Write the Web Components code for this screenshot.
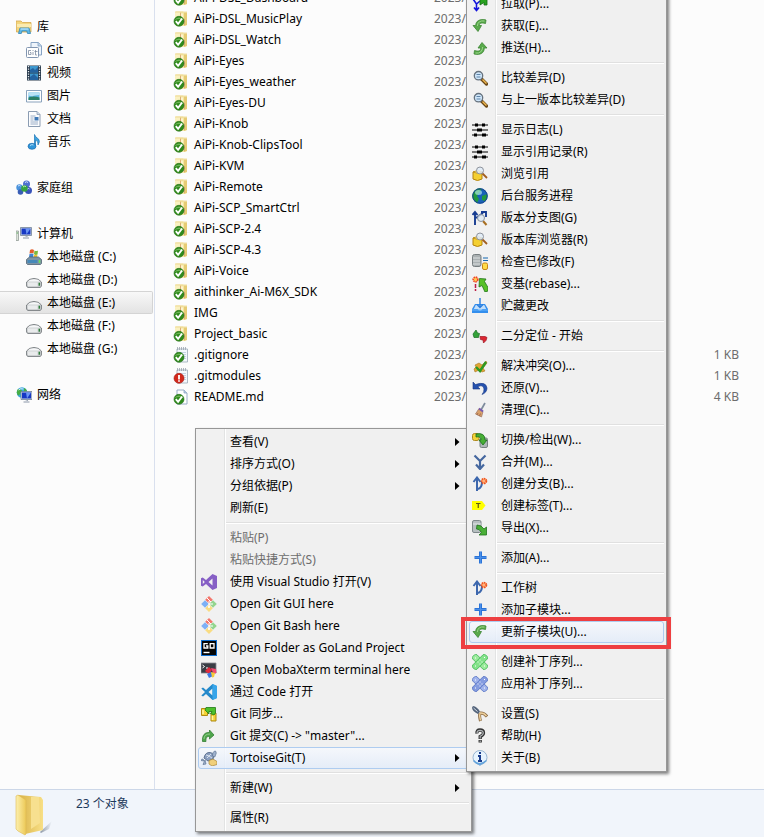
<!DOCTYPE html>
<html lang="zh-CN">
<head>
<meta charset="utf-8">
<title>Explorer</title>
<style>
  html, body { height: 100%; }
  body {
    margin: 0;
    overflow: hidden;
    background: #fcfcfc;
    color: #000;
    font: 12px/16px "Noto Sans", "Noto Sans CJK SC", sans-serif;
  }
</style>
</head>
<body>
<explorer-window>
  <nav-pane slot="nav">
    <nav-group icon="library" label="库">
      <nav-item icon="gitlib">Git</nav-item>
      <nav-item icon="video">视频</nav-item>
      <nav-item icon="picture">图片</nav-item>
      <nav-item icon="document">文档</nav-item>
      <nav-item icon="music">音乐</nav-item>
    </nav-group>
    <nav-group icon="homegroup" label="家庭组"></nav-group>
    <nav-group icon="computer" label="计算机">
      <nav-item icon="sysdrive">本地磁盘 (C:)</nav-item>
      <nav-item icon="drive">本地磁盘 (D:)</nav-item>
      <nav-item icon="drive" selected>本地磁盘 (E:)</nav-item>
      <nav-item icon="drive">本地磁盘 (F:)</nav-item>
      <nav-item icon="drive">本地磁盘 (G:)</nav-item>
    </nav-group>
    <nav-group icon="network" label="网络"></nav-group>
  </nav-pane>
  <file-list slot="files"></file-list>
  <status-bar slot="status">23 个对象</status-bar>
</explorer-window>

<popup-menu class="context">
  <menu-item submenu>查看(V)</menu-item>
  <menu-item submenu>排序方式(O)</menu-item>
  <menu-item submenu>分组依据(P)</menu-item>
  <menu-item>刷新(E)</menu-item>
  <menu-separator></menu-separator>
  <menu-item disabled>粘贴(P)</menu-item>
  <menu-item disabled>粘贴快捷方式(S)</menu-item>
  <menu-item icon="vs">使用 Visual Studio 打开(V)</menu-item>
  <menu-item icon="gitfw">Open Git GUI here</menu-item>
  <menu-item icon="gitfw">Open Git Bash here</menu-item>
  <menu-item icon="goland">Open Folder as GoLand Project</menu-item>
  <menu-item icon="moba">Open MobaXterm terminal here</menu-item>
  <menu-item icon="vscode">通过 Code 打开</menu-item>
  <menu-item icon="sync">Git 同步...</menu-item>
  <menu-item icon="commit">Git 提交(C) -&gt; "master"...</menu-item>
  <menu-item icon="tortoise" submenu active>TortoiseGit(T)</menu-item>
  <menu-separator></menu-separator>
  <menu-item submenu>新建(W)</menu-item>
  <menu-separator></menu-separator>
  <menu-item>属性(R)</menu-item>
</popup-menu>

<popup-menu class="tortoise">
  <menu-item icon="pull">拉取(P)...</menu-item>
  <menu-item icon="fetch">获取(E)...</menu-item>
  <menu-item icon="push">推送(H)...</menu-item>
  <menu-separator></menu-separator>
  <menu-item icon="diff">比较差异(D)</menu-item>
  <menu-item icon="diff">与上一版本比较差异(D)</menu-item>
  <menu-separator></menu-separator>
  <menu-item icon="log">显示日志(L)</menu-item>
  <menu-item icon="log">显示引用记录(R)</menu-item>
  <menu-item icon="browse">浏览引用</menu-item>
  <menu-item icon="globe">后台服务进程</menu-item>
  <menu-item icon="graph">版本分支图(G)</menu-item>
  <menu-item icon="browse">版本库浏览器(R)</menu-item>
  <menu-item icon="check">检查已修改(F)</menu-item>
  <menu-item icon="rebase">变基(rebase)...</menu-item>
  <menu-item icon="stash">贮藏更改</menu-item>
  <menu-separator></menu-separator>
  <menu-item icon="bisect">二分定位 - 开始</menu-item>
  <menu-separator></menu-separator>
  <menu-item icon="resolve">解决冲突(O)...</menu-item>
  <menu-item icon="revert">还原(V)...</menu-item>
  <menu-item icon="clean">清理(C)...</menu-item>
  <menu-separator></menu-separator>
  <menu-item icon="switch">切换/检出(W)...</menu-item>
  <menu-item icon="merge">合并(M)...</menu-item>
  <menu-item icon="branch">创建分支(B)...</menu-item>
  <menu-item icon="tag">创建标签(T)...</menu-item>
  <menu-item icon="export">导出(X)...</menu-item>
  <menu-separator></menu-separator>
  <menu-item icon="add">添加(A)...</menu-item>
  <menu-separator></menu-separator>
  <menu-item icon="branch">工作树</menu-item>
  <menu-item icon="add">添加子模块...</menu-item>
  <menu-item icon="fetch" active marked>更新子模块(U)...</menu-item>
  <menu-separator></menu-separator>
  <menu-item icon="patch">创建补丁序列...</menu-item>
  <menu-item icon="patchblue">应用补丁序列...</menu-item>
  <menu-separator></menu-separator>
  <menu-item icon="settings">设置(S)</menu-item>
  <menu-item icon="help">帮助(H)</menu-item>
  <menu-item icon="about">关于(B)</menu-item>
</popup-menu>

<script>
const OK = '<circle cx="6" cy="10.3" r="5" fill="#2f8a1c" stroke="#1f6d12" stroke-width=".6"/><path d="M1.8 9a4.500 4 0 0 1 8.400 0q-4-2-8.400 0" fill="#6fb658"/><path d="M2.800 10.200l2.300 2.600 4-5.300" fill="none" stroke="#fff" stroke-width="1.900"/>';
const NOTE = '<path d="M4 2h10.500v13H4z" fill="#f4f8fc" stroke="#9aa9b8" stroke-width=".8"/><path d="M4.500 0v3M6.500 0v3M8.500 0v3M10.500 0v3M12.500 0v3" stroke="#9aa3ad" stroke-width=".8"/><path d="M6 5.500h7M6 7.500h7M6 9.500h7M6 11.500h7" stroke="#b8c9dc" stroke-width=".8"/>';
const FOLDER = '<path d="M2 2l1-1.500h7l1 1h3V14l-4 1H3z" fill="#f5e6a2"/><path d="M2 2l1-1.500h4.500L8 14H3z" fill="#faf1c0"/><path d="M11 1.500h3V14l-3 1z" fill="#e6cb74"/><path d="M7.500 1.500v5.500M11.500 8v6" stroke="#dcae74"/><path d="M9 2.500v6" stroke="#fff8dc" stroke-width="1.500"/><path d="M2 1h12" stroke="#ecd68e" stroke-width=".8"/>';
const CYL = '<path d="M1 6v7q4.500 3 9 0V6z" fill="#f4cf31" stroke="#b4820d"/><path d="M1 6q4.500-3 9 0-4.500 2.500-9 0" fill="#fff19a" stroke="#b4820d" stroke-width=".8"/>';
const BRANCH = '<path d="M5 15V3M1.500 6L5 1.500 8.500 6M6 13q4-1 4-7" fill="none" stroke="#3d67ad" stroke-width="2"/>';
const SPARK = '<circle cx="12" cy="5" r="2.400" fill="#ffb27d" stroke="#f0541c" stroke-width="1.800" stroke-dasharray="1.400 .6"/>';
const BANDAGE = (a, b, s) => `<g stroke="${s}" stroke-width=".8"><rect x="-1" y="5" width="18" height="6" rx="2" fill="${a}" transform="rotate(45 8 8)"/><rect x="-1" y="5" width="18" height="6" rx="2" fill="${b}" transform="rotate(-45 8 8)"/></g><path d="M5.500 8h1M9.500 8h1M7.500 6h1M7.500 10h1M3 12h1M12 3.500h1M3 4h1M12 12h1" stroke="#fff"/>`;
const MONITOR = (x, y) => `<g transform="translate(${x} ${y})"><path d="M0 0h11v8H0z" fill="#c9d4e2" stroke="#64758c" stroke-width=".7"/><path d="M1 1h9v6H1z" fill="#1738c4"/><path d="M5 1h5L6 7z" fill="#6c95f2"/><path d="M4 8.500h3v1.500H2.500v1h6v-1" fill="#8a96a8"/></g>`;
const ICONS = {
  folder: FOLDER + OK,
  noteok: NOTE + OK,
  notebad: NOTE + '<circle cx="6" cy="10.300" r="5" fill="#d2281c" stroke="#a3170f" stroke-width=".6"/><path d="M6 7v4.500M6 12.300v1.500" stroke="#fff" stroke-width="1.800"/>',
  fileok: '<path d="M4 1h7l3 3v11H4z" fill="#fff" stroke="#8ea5c1" stroke-width=".9"/><path d="M11 1v3h3" fill="#b5cbe4" stroke="#8ea5c1" stroke-width=".8"/>' + OK,
  library: '<path d="M0 2h5l1.500 1.500H15V13H.5z" fill="#f4d67d" stroke="#d5a74c" stroke-width=".8"/><path d="M1 5h14v3H1z" fill="#fbebb0"/><path d="M2.500 14.500l1.500-5.500h9l1.500 5.500h-3l-.7-2.500H6l-.7 2.500z" fill="#5fb8e6" stroke="#3187b9" stroke-width=".8"/><path d="M4.500 10h8" stroke="#bce5fa" stroke-width="1.300"/>',
  gitlib: '<path d="M5 .5h7.500L15.500 4v9H5z" fill="#eef4fb" stroke="#87a3c4"/><path d="M12 .5V4h3.500" fill="#bdd3ea" stroke="#87a3c4" stroke-width=".8"/><rect x=".5" y="5.500" width="12" height="10" rx="1" fill="#fff" stroke="#8296b1"/><path d="M5 8.500H2.500v4H5v-2H4M7 10v3M7 8v1M9.500 8v5h1.500M8.500 9.500h3" fill="none" stroke="#7d8ba0" stroke-width=".8"/>',
  video: '<path d="M1 .5h14v15H1z" fill="#27394b"/><path d="M4 1h8v6.500H4zM4 8.500h8V15H4z" fill="#3f98ce"/><path d="M4 5l3-2 2 2 3-3v5.500H4zM4 12l4-3 4 4v2H4z" fill="#2463a0"/><path d="M2.500 1v14M13.500 1v14" stroke="#e8edf2" stroke-width="1.300" stroke-dasharray="1.300 1.200"/>',
  picture: '<path d="M.5 2.500h15v11.500H.5z" fill="#fff" stroke="#8aa2bc"/><path d="M2.500 4.500h11V12h-11z" fill="#58b4e2"/><path d="M2.500 4.500h11v2.500q-5 0-7 1.500l-4-1z" fill="#b9e2f5"/><path d="M2.500 12V9.500q5-2 11 0V12z" fill="#2b8068"/>',
  document: '<path d="M2.500.5H11L14 3.500v12H2.500z" fill="#fbfcfe" stroke="#8b9cb2"/><path d="M11 .5v3h3" fill="#ccd9e9" stroke="#8b9cb2" stroke-width=".8"/><path d="M4.500 5h5M4.500 7h3M4.500 9h3M4.500 11h7.500M4.500 13h7.500" stroke="#8ea5c1" stroke-width=".9"/><path d="M8.500 6h4v3.500h-4z" fill="#3e78b6"/>',
  music: '<path d="M8.500 12V.5q1 3 4 4.500 2 2.500-.5 6 .5-4-2.500-5V12" fill="#3ea2de" stroke="#1c76b8" stroke-width=".7"/><ellipse cx="6" cy="12.300" rx="4" ry="3" fill="#2f96da" stroke="#1b6aae" stroke-width=".7"/><path d="M4 11.500q2-1.500 3.500-.5" stroke="#b4e0fa" fill="none"/>',
  homegroup: '<circle cx="10.500" cy="4" r="3.500" fill="#4e6fd0"/><circle cx="3.500" cy="7.500" r="3.200" fill="#4a93dc"/><circle cx="12.500" cy="10.500" r="3.500" fill="#3953bb"/><circle cx="4.500" cy="12" r="2.800" fill="#395db5"/><circle cx="8.500" cy="8.500" r="3.300" fill="#35a340"/><path d="M7 7q1.500-1.500 3-.5" stroke="#bdf0b5" fill="none"/><path d="M9 2.500q1.500-1.500 3 0M2 6q1.500-1 2.500 0M11.500 9q1-1 2 0" stroke="#d3e4ff" fill="none"/>',
  computer: '<path d="M0 5h2.500v9.500H0z" fill="#dce3da" stroke="#88948c" stroke-width=".7"/><path d="M.7 7h1.200" stroke="#48a84a"/>' + MONITOR(4.5, 1.5),
  network: '<circle cx="6" cy="5.500" r="5.300" fill="#3ba7dc"/><path d="M2 2q3 0 4 1.500-2 3-3 5Q1 8 .7 5.500 1 3 2 2M8 1q2.500 1 3 3l-3 1zM5 8h4l-2 2.700z" fill="#47ae43"/><path d="M2.500 3q2-2 5-1" stroke="#d6f2fb" fill="none"/>' + MONITOR(5, 4.5),
  drive: '<path d="M.6 10Q3 6.500 8 6.500t7.400 3.500v4l-1 1.400H1.600l-1-1.400z" fill="#cfd2d4" stroke="#6f7578" stroke-width=".9"/><path d="M1.500 9.600Q4 7.300 8 7.300t6.500 2.300z" fill="#f6f7f8"/><path d="M1.500 10.500h10v3.800h-9.500z" fill="#e9ebec"/><path d="M13.300 10.700v3" stroke="#2f7d3a" stroke-width="1.500"/>',
  sysdrive: '<path d="M4 1q2-1.500 4 0l-.5 3.500q-2-1-4 0z" fill="#e4602c"/><path d="M8.500 1.500q2 1 3.500 0l-.5 4q-2 1-3.500-.5z" fill="#7cba3c"/><path d="M3.500 5q2-1 4 0L7 8.500H3z" fill="#3d83d3"/><path d="M8 5.500q2 1 3.500 0L11 9H7.500z" fill="#f4c22e"/><path d="M.5 10.500l3-2.500h9l3 2.500v4l-1 1H1.500l-1-1z" fill="#7e94a5" stroke="#506575" stroke-width=".8"/><path d="M1.500 11h10v3h-10z" fill="#4689b9"/><path d="M13.500 11v3" stroke="#6be15a" stroke-width="1.500"/>',
  vs: '<path d="M11.500 0L16 2v12l-4.500 2L5 10l-3.300 2.500L0 11.700V4.300l1.700-.8L5 6zM11.500 4.500L7.500 8l4 3.500zM1.800 6v4L3.800 8z" fill="#865fc5" fill-rule="evenodd"/>',
  gitfw: '<path d="M8 0l3.800 3.800L8 7.600 4.200 3.800z" fill="#f3766c"/><path d="M4 4.200L7.800 8 4 11.800.2 8z" fill="#7db0f6"/><path d="M12 4.200L15.800 8 12 11.800 8.200 8z" fill="#93d58e"/><path d="M8 8.400l3.800 3.800L8 16l-3.800-3.800z" fill="#f9dc82"/><path d="M6 2l4 4M8 5v6M8 8h4" stroke="#fff"/><circle cx="8" cy="11" r="1" fill="#fff"/>',
  goland: '<path d="M0 0h16v16H0z" fill="#0f6ed0"/><path d="M1 1h14v14H1z" fill="#050505"/><path d="M6.800 3.700H3v4.300h3.800V6H5M9.200 3.700h3.800v4.300H9.200z" fill="none" stroke="#fff" stroke-width="1.300"/><path d="M2.500 12.500h6" stroke="#fff" stroke-width="1.400"/>',
  moba: '<path d="M0 1h15v10H0z" fill="#3a3d45" stroke="#8b8b93" stroke-width=".8"/><path d="M1.500 3l2 1.500-2 1.500M5 6h2" stroke="#fff" fill="none"/><path d="M4 9l4-4 3 3-3 4z" fill="#e32b3d"/><path d="M10 6l5 1 .5 4-3 1z" fill="#f04a72"/><path d="M6 12l4-2 2 4-4 2z" fill="#3c78e4"/><path d="M10 10l4 1-1 4-2 .5z" fill="#f6ca37"/>',
  vscode: '<path d="M11.500 0L16 2v12l-4.500 2L5 10l-3 2.500L.3 11.500 4 8 .3 4.500 2 3.500 5 6zM11.500 4.500L7.500 8l4 3.500z" fill="#2489ca" fill-rule="evenodd"/><path d="M11.500 0L16 2v12l-4.500 2z" fill="#37a5ea"/>',
  sync: '<path d="M.5 2.500h6v7h-6z" fill="#f4d237" stroke="#af8a13"/><path d="M10 7h5v8h-5z" fill="#f4d237" stroke="#af8a13"/><path d="M5 1.500h9.500V7l-1.500 2-3.500-1.500 1.500-2H8v2.500L4 4z" fill="#4cc02c" stroke="#1f7a14" stroke-width=".8"/><path d="M2 4v4M11.500 10v4" stroke="#fff5a4" stroke-width="1.500"/>',
  commit: '<path d="M1.500 13.500C1 7 4 4 8.500 4.500V2L13 7l-4.500 4V8.500C6 8.300 4.500 9.500 5 13.500z" fill="#4fa54b" stroke="#357f35" stroke-width=".8"/><path d="M3 11q0-5 6-5" stroke="#93cf8c" fill="none"/>',
  tortoise: '<path d="M3 8q1-6 6.500-5.500Q14 4 12 9l-5 2z" fill="#8b9fc0" stroke="#5f7391"/><path d="M5 5l3 1 2-2M6 8l2-2 3 2" stroke="#d6e0ec" fill="none"/><path d="M11.500 6q0-5 3-5l.8 2-1.500 4zM2 9q-2 0-2 1.500L3 11zM4 10l1 4-3 .5zM12 9l2 4-2 1z" fill="#9fb2ce" stroke="#5f7391" stroke-width=".7"/><path d="M8 10.500l4-1.500 4 2.500v3L11 16l-3-2z" fill="#f0cf7a" stroke="#a88438" stroke-width=".7"/>',
  pull: '<path d="M4.500 14V8L1 3M4.500 8L8 5M2 11.500L4.500 14.500 7 11.500" fill="none" stroke="#1414dc" stroke-width="1.600"/><path d="M8 9V2h7v7h-3V6.500z" fill="#29a31f" stroke="#126911" stroke-width=".8"/>',
  fetch: '<path d="M14 2C8 .5 3.500 3 3.800 7.500H1L6 13.500l3.500-6H7.300C7.300 5 9 4.500 13.500 5.500z" fill="#59aa4b" stroke="#3c8534" stroke-width=".8"/><path d="M12.500 3Q6 2 5.300 8" stroke="#9bd48b" fill="none"/>',
  push: '<path d="M2 14c6 1.500 10.500-1 10.200-6H15L10 2.500 6 8h2.700C9 11 7 11.700 2.500 10.500z" fill="#59aa4b" stroke="#3c8534" stroke-width=".8"/><path d="M3.500 13Q10 14 10.700 7" stroke="#9bd48b" fill="none"/>',
  diff: '<path d="M9.500 9l5 5" stroke="#6b4816" stroke-width="3.200" stroke-linecap="round"/><path d="M10.500 9.500l4 4" stroke="#efb851" stroke-width="1.400"/><circle cx="6.500" cy="5.700" r="4.200" fill="#cfe6fa" stroke="#66727e" stroke-width="1.300"/><path d="M4.500 4.500h4M4.500 7h4" stroke="#5f84a8"/>',
  log: '<path d="M0 3h16M0 8h16M0 13h16" stroke="#000" stroke-width="1.200"/><path d="M3 1.500h3v3H3zM10 1.500h3v3h-3zM5 6.500h5v3H5zM2 11.500h3v3H2zM10 11.500h4v3h-4z" fill="#000"/>',
  browse: CYL + '<path d="M10 7l5 5" stroke="#a15e21" stroke-width="1.800"/><circle cx="8" cy="4.500" r="3.500" fill="#e1ecf8" fill-opacity=".85" stroke="#8e939c"/>',
  globe: '<circle cx="8" cy="8" r="7.700" fill="#1a62b8"/><path d="M2 3Q6-1 10 1L7 5 5 8l2 3-2 4Q0 12 .3 7zM10 8l5-2q1 4-2 7l-3-1z" fill="#23993d"/><circle cx="8" cy="8" r="7.200" fill="none" stroke="#17468f"/><ellipse cx="6.500" cy="4.500" rx="3.500" ry="2.500" fill="#b9ecf0" fill-opacity=".65"/>',
  graph: '<path d="M3 15V3M.5 5L3 2l2.500 3M4 8l7-5M9 2h5v5" fill="none" stroke="#173c91" stroke-width="1.900"/><path d="M11 11l3.500 4" stroke="#a86f22" stroke-width="2"/><circle cx="9" cy="8" r="3.500" fill="#dde8f2" fill-opacity=".8" stroke="#8993a0"/>',
  check: '<rect x=".5" y=".5" width="8.500" height="12" rx="2" fill="#aab0b2" stroke="#777e81"/><path d="M1 4h7M1 7h7M1 10h7" stroke="#dce0e1"/><path d="M11 4h5M11 6.500h5" stroke="#1569b2" stroke-width="1.200"/><rect x="10.500" y="9" width="5" height="6.500" rx="1.500" fill="#ffdb48" stroke="#c88616"/>',
  rebase: '<circle cx="3.500" cy="3.500" r="2.300" fill="#ffcb54" stroke="#f04522" stroke-width="1.700" stroke-dasharray="1.400 .6"/><path d="M3.500 8v4M3.500 13v2" stroke="#bc1c43" stroke-width="1.500"/><path d="M7 11l.5-8.500 6.500.5-1.500 2.500 3.500 6v3.500l-3 1-3-6.500z" fill="#58c028" stroke="#207419" stroke-width=".8"/>',
  stash: '<path d="M3 6h10l3 5v4H0v-4z" fill="#338eed"/><path d="M3.800 7h8.400l2 4h-3.700q-2.500 3-5 0H1.800z" fill="#c3dffa"/><path d="M8 0v9M5 6.500l3 3 3-3" fill="none" stroke="#287dde" stroke-width="1.400"/><path d="M0 12h16" stroke="#67b3fb"/>',
  bisect: '<path d="M1 6l3-4 1.500 3 2 .5-1 4H2z" fill="#33a239" stroke="#176c22" stroke-width=".7"/><path d="M8 8.500h5l2 1-1 3-2.500 2.500-.5-3-2.500-.5z" fill="#dc2631" stroke="#9d1421" stroke-width=".7"/>',
  resolve: '<path d="M3 7l4-2 3 2 4-4 1 2-4 5 2 3-3 1-3-2-4 2-1-3 2-2z" fill="#e2a632" stroke="#a47623" stroke-width=".6"/><path d="M4 9l4 4L14 4" stroke="#2d9a23" stroke-width="2.400" fill="none"/>',
  revert: '<path d="M1 2v7h7L5.800 6.700Q11 4 12 9q.3 3-2 5.500 5-2 5-6.500Q14 1 3.500 4.500z" fill="#2552ae" stroke="#173785" stroke-width=".6"/>',
  clean: '<path d="M13 1L9 8" stroke="#7e8b9c" stroke-width="1.700"/><path d="M7 6.500l4 3-1.500 5.500-6-3z" fill="#d9a16b" stroke="#9c7262" stroke-width=".7"/><path d="M7 6.500l4 3" stroke="#765ab0" stroke-width="2"/><path d="M6 11l-1 2M8.500 11.500L7.500 14" stroke="#986043" stroke-width=".8"/>',
  switch: '<rect x="8" y="6" width="7.500" height="9.500" rx="1.500" fill="#aeb7b8" stroke="#798182"/><rect x=".5" y="1.500" width="6.500" height="7" rx="2" fill="#f3d33a" stroke="#b08a1e"/><path d="M4 2q9-2 9 6h2l-4 5-4-5h2q0-4-5-3z" fill="#47ae35" stroke="#19701c" stroke-width=".8"/>',
  merge: '<path d="M2.500 1.500L8 7l5.500-5.500M8 6v8M4 10.500L8 15l4-4.500" fill="none" stroke="#45679f" stroke-width="2.200"/>',
  branch: BRANCH + SPARK,
  tag: '<path d="M0 3h10l3.500 4.500L10 12H0z" fill="#ff0"/><path d="M4 5.500h4.500M6.250 5.500V10" stroke="#5f5a12" stroke-width="1.200"/>',
  export: '<rect x=".5" y=".5" width="8.500" height="12" rx="1.500" fill="#b7bfc1" stroke="#7e888b"/><path d="M1 4h8" stroke="#e4e8e9"/><path d="M5 5l4 1 3 3 2.500-2v8H7l2.500-2.500L7 9.500 4.500 9z" fill="#4aaf37" stroke="#20741d" stroke-width=".8"/>',
  add: '<path d="M8.500 1.500v12M2.500 7.500h12" stroke="#2b74d8" stroke-width="3"/><path d="M8.500 2v11M3 7.500h11" stroke="#4a8fe8"/>',
  patch: BANDAGE('#9beb9d', '#83e28a', '#43b857'),
  patchblue: BANDAGE('#a1b4ec', '#859ce0', '#5673c3'),
  settings: '<path d="M8 7q-1 3 .5 8M8 7q4-.5 7 3.500" stroke="#8b6a42" stroke-width="3" fill="none"/><path d="M8 7q-1 3 .5 7.500M8 7q4-.5 6.500 3" stroke="#edcf9c" stroke-width="1.400" fill="none"/><path d="M1 0q4 .5 7 5.500l-2 2.500Q0 5 0 1.500z" fill="#54647b"/><path d="M1.500 2l4 3.500" stroke="#d6dde6"/>',
  help: '<path d="M5 5.500Q4.500 2 8 2t3.500 3q0 2-3.300 3.500V11M8.200 12v2.500" fill="none" stroke="#333" stroke-width="3.300"/><path d="M5 5q0-2.700 3-2.700t3.300 2.500Q11.200 7 8.200 8.300v2.200M8.200 12.500v1.500" fill="none" stroke="#aeb2b5" stroke-width="1.200"/>',
  about: '<circle cx="8" cy="7.500" r="7" fill="#e6f3fd" stroke="#82a5c6" stroke-width=".8"/><path d="M5 13.500l3 2.500 2.500-2.500" fill="#72a9dc"/><path d="M1.500 10.500q5.500 6.500 13 0" stroke="#63a3dc" stroke-width="1.500" fill="none"/><path d="M8 2v2M6 6h2v5M6 11h4" stroke="#1a3d8d" stroke-width="2" fill="none"/>'
};
const svg = (name, size = 16) => ICONS[name]
  ? `<svg viewBox="0 0 16 16" width="${size}" height="${size}" aria-hidden="true">${ICONS[name]}</svg>` : '';

class ShadowElement extends HTMLElement {
  connectedCallback() {
    if (!this.shadowRoot) this.attachShadow({ mode: 'open' }).innerHTML = this.view();
  }
}
const define = (name, view) => customElements.define(name, class extends ShadowElement {
  view() { return view(this); }
});

define('explorer-window', () => `<style>
  :host { display: flex; flex-direction: column; height: 100%; }
  .main { flex: 1; min-height: 0; display: flex; overflow: hidden; }
  main { flex: 1; min-width: 0; }
</style><div class="main"><slot name="nav"></slot><main><slot name="files"></slot></main></div><slot name="status"></slot>`);

define('nav-pane', () => `<style>
  :host { display: block; flex: none; width: 154px; border-right: 1px solid #d9e0ee; }
  nav { display: flex; flex-direction: column; gap: 23px; padding-top: 15px; }
</style><nav><slot></slot></nav>`);

const ROW = `a { display: flex; align-items: center; gap: 5px; box-sizing: border-box; height: 23px; color: inherit;
  text-decoration: none; white-space: nowrap; border: 1px solid transparent; border-left: 0; border-radius: 0 2px 2px 0; }
  svg { flex: none; }`;
define('nav-group', el => `<style>
  :host { display: block; } ${ROW} a { padding-left: 16px; }
</style><a href="#">${svg(el.getAttribute('icon'))}<span>${el.getAttribute('label')}</span></a><slot></slot>`);
define('nav-item', el => `<style>
  :host { display: block; } ${ROW} a { padding-left: 26px; margin-right: 1px; }
  :host([selected]) a { background: linear-gradient(#f8f8f8, #e3e3e3); border-color: #d4d4d4; }
</style><a href="#">${svg(el.getAttribute('icon'))}<slot></slot></a>`);

const FILES = [
  ...['AiPi-DSL_Dashboard', 'AiPi-DSL_MusicPlay', 'AiPi-DSL_Watch', 'AiPi-Eyes', 'AiPi-Eyes_weather', 'AiPi-Eyes-DU',
    'AiPi-Knob', 'AiPi-Knob-ClipsTool', 'AiPi-KVM', 'AiPi-Remote', 'AiPi-SCP_SmartCtrl', 'AiPi-SCP-2.4', 'AiPi-SCP-4.3',
    'AiPi-Voice', 'aithinker_Ai-M6X_SDK', 'IMG', 'Project_basic'].map(n => ['folder', n, '']),
  ['noteok', '.gitignore', '1 KB'], ['notebad', '.gitmodules', '1 KB'], ['fileok', 'README.md', '4 KB']
];
/* The list is scrolled so that its first row is partly out of view. */
define('file-list', () => `<style>
  :host { display: block; }
  table { width: 100%; table-layout: fixed; border-collapse: collapse; margin-top: -13px; }
  td { height: 21px; padding: 0; white-space: nowrap; vertical-align: middle; }
  .name { width: 279px; }
  .name div { display: flex; align-items: center; gap: 5px; padding-left: 18px; }
  .date, .size { color: #6d6d6d; }
  .size { text-align: right; padding-right: 25px; }
</style><table><tbody>${FILES.map(([icon, name, size]) =>
  `<tr><td class="name"><div>${svg(icon)}<span>${name}</span></div></td><td class="date">2023/</td><td class="size">${size}</td></tr>`).join('')}</tbody></table>`);

define('status-bar', () => `<style>
  :host { display: flex; flex: none; gap: 22px; box-sizing: border-box; height: 48px; padding: 3px 14px 0;
    border-top: 1px solid #ccd7e8; background: #f1f5fb; color: #1e395b; }
  span { padding-top: 3px; }
</style><svg width="40" height="44" viewBox="0 0 40 44" aria-hidden="true">
  <defs>
    <linearGradient id="a" x1="0" x2="1"><stop offset="0" stop-color="#fdf0ae"/><stop offset="1" stop-color="#ecc957"/></linearGradient>
    <linearGradient id="b" x1="0" x2="1"><stop offset="0" stop-color="#d8b145"/><stop offset="1" stop-color="#f8df86"/></linearGradient>
    <linearGradient id="c" x1="0" x2="1"><stop offset="0" stop-color="#8d97a6"/><stop offset="1" stop-color="#f1f5fb"/></linearGradient>
  </defs>
  <path d="M26 39l12-11-3 8-8 4z" fill="url(#c)"/>
  <path d="M4 2l23 2 2 3v30l-18 4z" fill="url(#b)"/>
  <path d="M17 4h8l1 26-9 6z" fill="#f7e08f"/>
  <path d="M2 3l2-1 8 5v34l-1 1-7-4-2-2z" fill="url(#a)" stroke="#ddb954" stroke-width=".6"/>
</svg><span><slot></slot></span>`);

define('popup-menu', () => `<style>
  :host { display: block; position: absolute; box-sizing: border-box; padding: 2px; border: 1px solid #979797;
    box-shadow: 2px 2px 3px rgba(0, 0, 0, .5);
    background: linear-gradient(90deg, #f1f1f1 28px, #e2e3e3 28px, #e2e3e3 29px, #fff 29px, #fff 30px, #f0f0f0 30px); }
  :host(.context) { left: 195px; top: 428px; width: 277px; }
  :host(.tortoise) { left: 466px; top: -10px; width: 201px; }
</style><div role="menu"><slot></slot></div>`);

define('menu-separator', () => `<style>
  :host { display: block; padding: 3px 0 3px 28px; }
  hr { height: 1px; margin: 0; border: 0; border-top: 1px solid #e0e0e0; background: #fff; }
</style><hr>`);

define('menu-item', el => `<style>
  :host { display: block; position: relative; }
  button { display: grid; grid-template-columns: 16px 1fr 5px; column-gap: 13px; align-items: center; width: 100%; height: 22px;
    box-sizing: border-box; margin: 0; padding: 0 8px 0 2px; border: 1px solid transparent; border-radius: 3px;
    background: none; font: inherit; color: inherit; text-align: left; white-space: nowrap; }
  .icon { height: 16px; }
  .icon svg { display: block; }
  :host([disabled]) button { color: #6d6d6d; }
  :host([active]) button { border-color: #aeccf0; background: linear-gradient(rgba(246, 249, 254, .8), rgba(226, 236, 250, .8)); }
  i { position: absolute; inset: -4px -7px -6px -8px; border: 4px solid #ee3f41; z-index: 1; pointer-events: none; }
</style><button type="button" role="menuitem"${el.hasAttribute('disabled') ? ' disabled' : ''}>
  <span class="icon">${svg(el.getAttribute('icon'))}</span><span><slot></slot></span>
  ${el.hasAttribute('submenu') ? '<svg width="5" height="8" viewBox="0 0 5 8" aria-hidden="true"><path d="M0 0l4.500 4L0 8z"/></svg>' : ''}
</button>${el.hasAttribute('marked') ? '<i></i>' : ''}`);
</script>
</body>
</html>
